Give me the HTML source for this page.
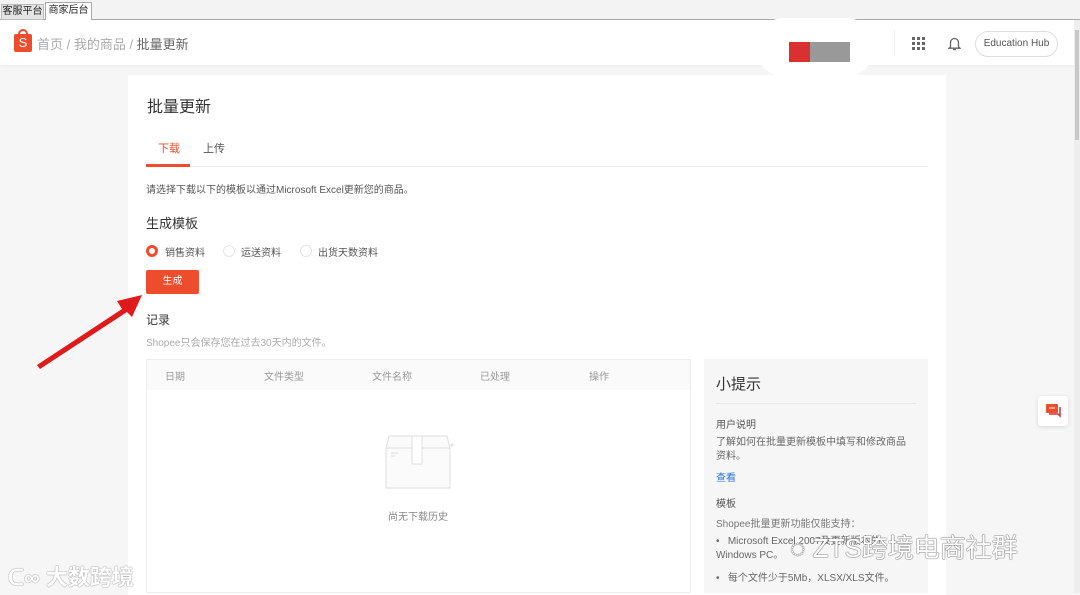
<!DOCTYPE html>
<html><head><meta charset="utf-8"><style>
*{margin:0;padding:0;box-sizing:border-box}
body{width:1080px;height:593px;overflow:hidden;background:#f6f6f6;font-family:"Liberation Sans","Noto Sans CJK SC",sans-serif;position:relative;color:#333}
.a{position:absolute;white-space:nowrap}
</style></head><body>
<div class="a" style="left:0;top:0;width:1080px;height:20px;background:#f3f3f3;border-bottom:1px solid #aaa"></div>
<div class="a" style="left:1px;top:4px;width:43px;height:16px;background:#e4e4e4;border:1px solid #bbb;font-size:10px;line-height:14px;text-align:center;color:#222">客服平台</div>
<div class="a" style="left:45px;top:2px;width:47px;height:19px;background:#fff;border:1px solid #aaa;border-bottom:none;font-size:10px;line-height:16px;text-align:center;color:#222">商家后台</div>
<div class="a" style="left:0;top:20px;width:1074px;height:45px;background:#fff;box-shadow:0 1px 3px rgba(0,0,0,.05)"></div>
<div class="a" style="left:14px;top:34px;width:18px;height:18px;background:#ee4d2d;border-radius:2px;color:#fff;font-size:13px;line-height:18px;text-align:center">S</div>
<div class="a" style="left:18px;top:29px;width:10px;height:7px;border:2px solid #ee4d2d;border-bottom:none;border-radius:5px 5px 0 0"></div>
<div class="a" style="left:37px;top:34px;font-size:13px;color:#aaa">首页 / 我的商品 / <span style="color:#666">批量更新</span></div>
<div class="a" style="left:755px;top:18px;width:120px;height:58px;background:#fff;border-radius:40px"></div>
<div class="a" style="left:789px;top:42px;width:21px;height:20px;background:#d93030"></div>
<div class="a" style="left:810px;top:42px;width:40px;height:20px;background:#999"></div>
<div class="a" style="left:894px;top:30px;width:1px;height:26px;background:#eee"></div>
<svg class="a" style="left:912px;top:37px" width="13" height="13" viewBox="0 0 13 13" fill="#666"><rect x="0" y="0" width="3" height="3"/><rect x="5" y="0" width="3" height="3"/><rect x="10" y="0" width="3" height="3"/><rect x="0" y="5" width="3" height="3"/><rect x="5" y="5" width="3" height="3"/><rect x="10" y="5" width="3" height="3"/><rect x="0" y="10" width="3" height="3"/><rect x="5" y="10" width="3" height="3"/><rect x="10" y="10" width="3" height="3"/></svg>
<svg class="a" style="left:948px;top:36px" width="13" height="15" viewBox="0 0 13 15" fill="none" stroke="#666" stroke-width="1.3"><path d="M2.5 11V6.5a4 4 0 0 1 8 0V11l1.5 1.2H1L2.5 11z"/><path d="M5 13.5h3"/></svg>
<div class="a" style="left:975px;top:31px;width:83px;height:26px;border:1px solid #ddd;border-radius:13px;font-size:10px;line-height:24px;text-align:center;color:#555">Education Hub</div>
<div class="a" style="left:1074px;top:20px;width:6px;height:573px;background:#eee"></div>
<div class="a" style="left:1075px;top:30px;width:4px;height:110px;background:#c8c8c8"></div>
<div class="a" style="left:128px;top:75px;width:818px;height:520px;background:#fff"></div>
<div class="a" style="left:147px;top:93px;font-size:16px;color:#333">批量更新</div>
<div class="a" style="left:158px;top:140px;font-size:11px;color:#ee4d2d">下载</div>
<div class="a" style="left:203px;top:140px;font-size:11px;color:#555">上传</div>
<div class="a" style="left:146px;top:166px;width:782px;height:1px;background:#e8e8e8"></div>
<div class="a" style="left:146px;top:164px;width:44px;height:3px;background:#ee4d2d"></div>
<div class="a" style="left:146px;top:181px;font-size:10px;color:#555">请选择下载以下的模板以通过Microsoft Excel更新您的商品。</div>
<div class="a" style="left:146px;top:213px;font-size:13px;color:#333">生成模板</div>
<div class="a" style="left:146px;top:245px;width:12px;height:12px;border:3px solid #ee4d2d;border-radius:50%"></div>
<div class="a" style="left:165px;top:244px;font-size:10px;color:#555">销售资料</div>
<div class="a" style="left:223px;top:245px;width:12px;height:12px;border:1px solid #e5e5e5;border-radius:50%"></div>
<div class="a" style="left:241px;top:244px;font-size:10px;color:#555">运送资料</div>
<div class="a" style="left:300px;top:245px;width:12px;height:12px;border:1px solid #e5e5e5;border-radius:50%"></div>
<div class="a" style="left:318px;top:244px;font-size:10px;color:#555">出货天数资料</div>
<div class="a" style="left:146px;top:270px;width:53px;height:24px;background:#ee4d2d;border-radius:2px;color:#fff;font-size:10px;line-height:24px;text-align:center">生成</div>
<div class="a" style="left:146px;top:311px;font-size:12px;color:#333">记录</div>
<div class="a" style="left:146px;top:334px;font-size:10px;color:#aaa">Shopee只会保存您在过去30天内的文件。</div>
<div class="a" style="left:146px;top:359px;width:545px;height:234px;border:1px solid #eee"></div>
<div class="a" style="left:147px;top:360px;width:543px;height:30px;background:#fafafa"></div>
<div class="a" style="left:165px;top:368px;font-size:10px;color:#999">日期</div>
<div class="a" style="left:264px;top:368px;font-size:10px;color:#999">文件类型</div>
<div class="a" style="left:372px;top:368px;font-size:10px;color:#999">文件名称</div>
<div class="a" style="left:480px;top:368px;font-size:10px;color:#999">已处理</div>
<div class="a" style="left:589px;top:368px;font-size:10px;color:#999">操作</div>
<svg class="a" style="left:383px;top:434px" width="75" height="56" viewBox="0 0 75 56" fill="none" stroke="#ddd"><path d="M6 2h58l3 12v40H3V14z" fill="#fbfbfb"/><path d="M3 14h64"/><rect x="29" y="2" width="10" height="28" fill="#fff"/><path d="M8 19h7M8 22h4"/><circle cx="69" cy="11" r="1"/></svg>
<div class="a" style="left:388px;top:508px;font-size:10px;color:#888">尚无下载历史</div>
<div class="a" style="left:704px;top:359px;width:224px;height:234px;background:#f6f6f7"></div>
<div class="a" style="left:716px;top:373px;font-size:15px;color:#333">小提示</div>
<div class="a" style="left:716px;top:403px;width:200px;height:1px;background:#e6e6e6"></div>
<div class="a" style="left:716px;top:416px;font-size:10px;color:#555">用户说明</div>
<div class="a" style="left:716px;top:436px;font-size:10px;color:#666;line-height:14px">了解如何在批量更新模板中填写和修改商品<br>资料。</div>
<div class="a" style="left:716px;top:469px;font-size:10px;color:#2673dd">查看</div>
<div class="a" style="left:716px;top:495px;font-size:10px;color:#555">模板</div>
<div class="a" style="left:716px;top:515px;font-size:10px;color:#777">Shopee批量更新功能仅能支持：</div>
<div class="a" style="left:716px;top:535px;font-size:10px;color:#666;line-height:14px">•&nbsp;&nbsp; Microsoft Excel 2007及更新版本的<br>Windows PC。</div>
<div class="a" style="left:716px;top:569px;font-size:10px;color:#666">•&nbsp;&nbsp; 每个文件少于5Mb，XLSX/XLS文件。</div>
<div class="a" style="left:1038px;top:396px;width:30px;height:30px;background:#fff;border-radius:3px;box-shadow:0 1px 4px rgba(0,0,0,.12)"></div>
<svg class="a" style="left:1045px;top:403px" width="16" height="15" viewBox="0 0 16 15"><rect x="1" y="1" width="12" height="9" rx="1" fill="#ee4d2d"/><path d="M4 11h9l2 2V4" stroke="#c33" stroke-width="1.5" fill="none"/><path d="M4 5h6" stroke="#fff"/></svg>
<svg class="a" style="left:30px;top:285px" width="120" height="90" viewBox="0 0 120 90"><path d="M7 80L92 24 87 16 112 10 102 32 97 27 10 84z" fill="#e01a1a"/></svg>
<div class="a" style="left:8px;top:560px;font-size:22px;color:#fff;text-shadow:0 0 1px #888,0 0 1px #888;font-weight:bold">ᑕ∞ 大数跨境</div>
<div class="a" style="left:790px;top:528px;font-size:26px;color:#fff;text-shadow:0 0 1px #666,0 0 1px #666,0 0 1px #666">◌ ZTS跨境电商社群</div>
</body></html>
